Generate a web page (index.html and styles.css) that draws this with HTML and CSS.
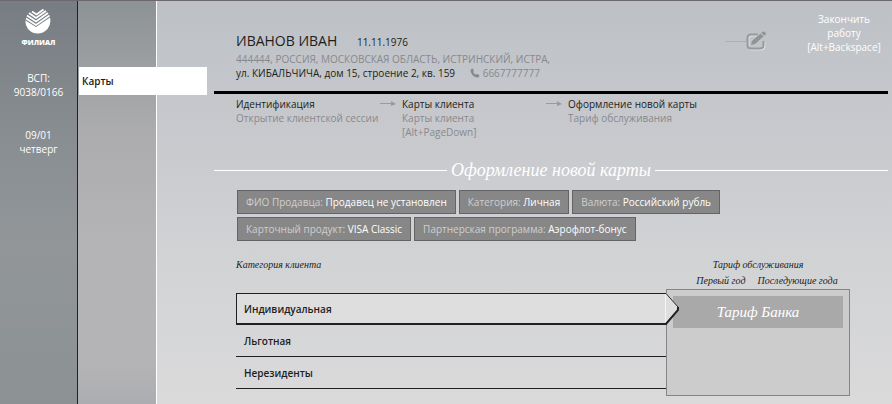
FILE: index.html
```html
<!DOCTYPE html>
<html lang="ru">
<head>
<meta charset="utf-8">
<meta name="viewport" content="width=device-width, initial-scale=1">
<title>Оформление новой карты</title>
<link rel="stylesheet" href="styles.css">
</head>
<body>
<div class="app">
  <aside class="branch">
    <div class="logo">
      <svg class="logo-mark" viewBox="0 0 26 26" aria-hidden="true">
        <path d="M.5 12.500L11 19L25 9.500Q26.500 16 22.500 21Q18 25.500 13 25.500Q7 25.500 3 21Q0 17 .5 12.500Z" fill="#fff"/>
        <path d="M1 10.500L11 17L24.500 7.500M2 7.500L11 13.500L23 5M4 5L11 10L21 3M7 3.500L11.500 6.500L18.500 1.500" fill="none" stroke="#fff" stroke-width="1.800"/>
      </svg>
      <span class="logo-name">ФИЛИАЛ</span>
    </div>
    <p class="office">ВСП:<br>9038/0166</p>
    <p class="date">09/01<br>четверг</p>
  </aside>
  <nav class="menu">
    <a class="menu-item" href="#cards">Карты</a>
  </nav>
  <main class="content">
    <header class="client">
      <div class="client-info">
        <h1 class="client-name">ИВАНОВ ИВАН <span class="birth">11.11.1976</span></h1>
        <p class="region">444444, РОССИЯ, МОСКОВСКАЯ ОБЛАСТЬ, ИСТРИНСКИЙ, ИСТРА,</p>
        <p class="street">ул. КИБАЛЬЧИЧА, дом 15, строение 2, кв. 159
          <span class="phone"><svg viewBox="0 0 10 10" aria-hidden="true"><path d="M2.200 .5Q3 .3 3.300 1.200L3.800 2.700Q3.900 3.300 3.100 3.800Q3.900 5.800 5.900 6.800Q6.600 5.800 7.200 6.100L9 7Q9.700 7.300 9.300 8.200Q8.600 9.700 7 9.500Q1.500 8.300 .5 3Q.3 1.100 2.200 .5Z"/></svg>6667777777</span></p>
      </div>
      <button class="edit" type="button" aria-label="Редактировать">
        <svg viewBox="0 0 42 20" aria-hidden="true">
          <path d="M0 10.500H21" stroke="#aeb0b0"/>
          <path d="M32 3.500H25Q21.500 3.500 21.500 7V14Q21.500 17.500 25 17.500H34Q37.500 17.500 37.500 14V10" fill="none" stroke="#dcdddf" stroke-width="2" transform="translate(1 1)"/>
          <path d="M32 3.500H25Q21.500 3.500 21.500 7V14Q21.500 17.500 25 17.500H34Q37.500 17.500 37.500 14V10" fill="none" stroke="#999a9c" stroke-width="2"/>
          <path d="M25 14L26 10L34.500 2.500L37.500 5.500L29 13ZM35.300 1.800L37 .5Q38 0 39.500 1.500Q40.300 2.800 39.500 3.500L38.200 4.800Z" fill="#929395"/>
        </svg>
      </button>
      <button class="exit" type="button">Закончить<br>работу<br>[Alt+Backspace]</button>
    </header>
    <ol class="steps">
      <li><a href="#identification">Идентификация</a><span>Открытие клиентской сессии</span></li>
      <li><a href="#client-cards">Карты клиента</a><span>Карты клиента<br>[Alt+PageDown]</span></li>
      <li><a href="#new-card" aria-current="step">Оформление новой карты</a><span>Тариф обслуживания</span></li>
    </ol>
    <h2 class="title">Оформление новой карты</h2>
    <div class="chips">
      <button type="button"><span>ФИО Продавца:</span> Продавец не установлен</button>
      <button type="button"><span>Категория:</span> Личная</button>
      <button type="button"><span>Валюта:</span> Российский рубль</button>
      <button type="button"><span>Карточный продукт:</span> VISA Classic</button>
      <button type="button"><span>Партнерская программа:</span> Аэрофлот-бонус</button>
    </div>
    <section class="tariff">
      <div class="labels">
        <p>Категория клиента</p>
        <div class="fee">
          <p>Тариф обслуживания</p>
          <p class="years"><span>Первый год</span><span>Последующие года</span></p>
        </div>
      </div>
      <div class="choice">
        <div class="categories">
          <button class="selected" type="button">Индивидуальная
            <svg class="pointer" viewBox="0 0 15 32" aria-hidden="true">
              <path d="M0 0L1 0L13 14V17L1 31H0Z" fill="#dedede"/>
              <path d="M0 .5H1L13 14" fill="none" stroke="#2a2a2a"/>
              <path d="M13 14V17L1 31H0" fill="none" stroke="#202022" stroke-width="2"/>
              <path d="M.5 1V29" stroke="#f5f5f5"/>
            </svg>
          </button>
          <button type="button">Льготная</button>
          <button type="button">Нерезиденты</button>
        </div>
        <div class="panel"><button type="button">Тариф Банка</button></div>
      </div>
    </section>
  </main>
</div>
</body>
</html>
```
FILE: styles.css
```css
* { box-sizing: border-box; }
body, p, h1, h2, ol { margin: 0; padding: 0; }
body {
  font: 10px/14px "Open Sans", "Noto Sans", sans-serif;
  color: #1d1d20;
}
button {
  font: inherit;
  color: inherit;
  background: none;
  border: 0;
  padding: 0;
  cursor: pointer;
}
a { color: inherit; text-decoration: none; }

.app {
  display: grid;
  grid-template-columns: 78px 79px 1fr;
  min-height: 100vh;
  border-top: 1px solid #6b696d;
}

.branch {
  display: flex;
  flex-direction: column;
  align-items: center;
  padding-top: 7px;
  text-align: center;
  color: #fff;
  border-right: 1px solid #222;
  background: linear-gradient(#777d82, #898e92 35%, #929699 60%, #8c9194);
}
.logo { display: flex; flex-direction: column; align-items: center; }
.logo-mark { width: 26px; height: 26px; }
.logo-name { font-size: 7px; line-height: 10px; font-weight: 800; margin-top: 4px; }
.office { margin-top: 23px; }
.date { margin-top: 29px; }

.menu {
  padding: 66px 0 0 1px;
  border-right: 1px solid #fff;
  background: linear-gradient(#8d9295, #acacae 32%, #b4b4b6 60%, #b4b4b6 90%, #acadb1);
}
.menu-item {
  display: block;
  position: relative;
  z-index: 1;
  margin-right: -51px;
  padding: 7px 3px;
  font-weight: 600;
  background: #fff;
}

.content {
  padding: 0 4px 7px 57px;
  background: linear-gradient(#bdc1c6, #c9cace 37%, #d2d3d5 65%, #dadadb);
}

.client {
  display: flex;
  align-items: flex-start;
  height: 93px;
  padding-left: 22px;
  border-bottom: 3px solid #000;
}
.client-info { flex: 1; padding-top: 30px; }
.client-name { font-size: 14px; line-height: 20px; font-weight: 400; }
.birth { font-size: 10px; margin-left: 16px; }
.region { color: #88898c; }
.phone { margin-left: 12px; color: #88898c; }
.phone svg { width: 10px; height: 10px; margin-right: 3px; vertical-align: -1px; fill: #88898c; }
.edit { margin-top: 30px; }
.edit svg { display: block; width: 42px; height: 20px; }
.exit { margin: 11px 4px 0 36px; width: 80px; color: #fff; }

.steps {
  display: grid;
  grid-template-columns: 166px 166px 1fr;
  padding: 3px 0 0 22px;
  min-height: 65px;
  list-style: none;
}
.steps li { position: relative; white-space: nowrap; }
.steps a, .steps li > span { display: block; }
.steps li > span { color: #88898c; }
.steps li + li::before {
  content: "";
  position: absolute;
  left: -22px;
  top: 4px;
  width: 16px;
  height: 5px;
  background: #999a9c;
  clip-path: polygon(0 2px, 11px 2px, 11px 0, 16px 3px, 11px 5px, 11px 3px, 0 3px);
}

.title {
  display: flex;
  align-items: center;
  gap: 4px;
  font: italic 18px/22px "Liberation Serif", serif;
  color: #fff;
}
.title::before, .title::after { content: ""; flex: 1; height: 1px; background: #fff; }

.chips {
  display: flex;
  flex-wrap: wrap;
  gap: 3px;
  padding: 9px 160px 0 23px;
}
.chips button {
  height: 24px;
  padding: 0 8px;
  color: #fff;
  white-space: nowrap;
  background: #878787;
  border: 1px solid #646464;
}
.chips span { color: #cfcfcf; }

.tariff { padding: 16px 38px 0 22px; }
.labels {
  display: flex;
  justify-content: space-between;
  font: italic 10px/16px "Liberation Serif", serif;
}
.fee { width: 184px; text-align: center; }
.years { display: flex; justify-content: center; gap: 12px; padding-left: 18px; }
.choice { display: grid; grid-template-columns: 1fr 184px; }
.categories { display: flex; flex-direction: column; padding-top: 4px; }
.categories button {
  height: 32px;
  padding: 0 8px;
  text-align: left;
  font-weight: 600;
  border-bottom: 1px solid #202022;
}
.categories .selected {
  position: relative;
  padding-left: 7px;
  background: #dedede;
  border: solid #202022;
  border-width: 1px 0 2px 1px;
}
.pointer { position: absolute; left: 100%; top: -1px; width: 15px; height: 32px; margin-left: -1px; }
.panel {
  height: 107px;
  padding: 6px;
  background: #ccc;
  border: 1px solid #858585;
}
.panel button {
  width: 100%;
  height: 32px;
  font: italic 15px/32px "Liberation Serif", serif;
  color: #fff;
  background: #a9a9a9;
}
```
